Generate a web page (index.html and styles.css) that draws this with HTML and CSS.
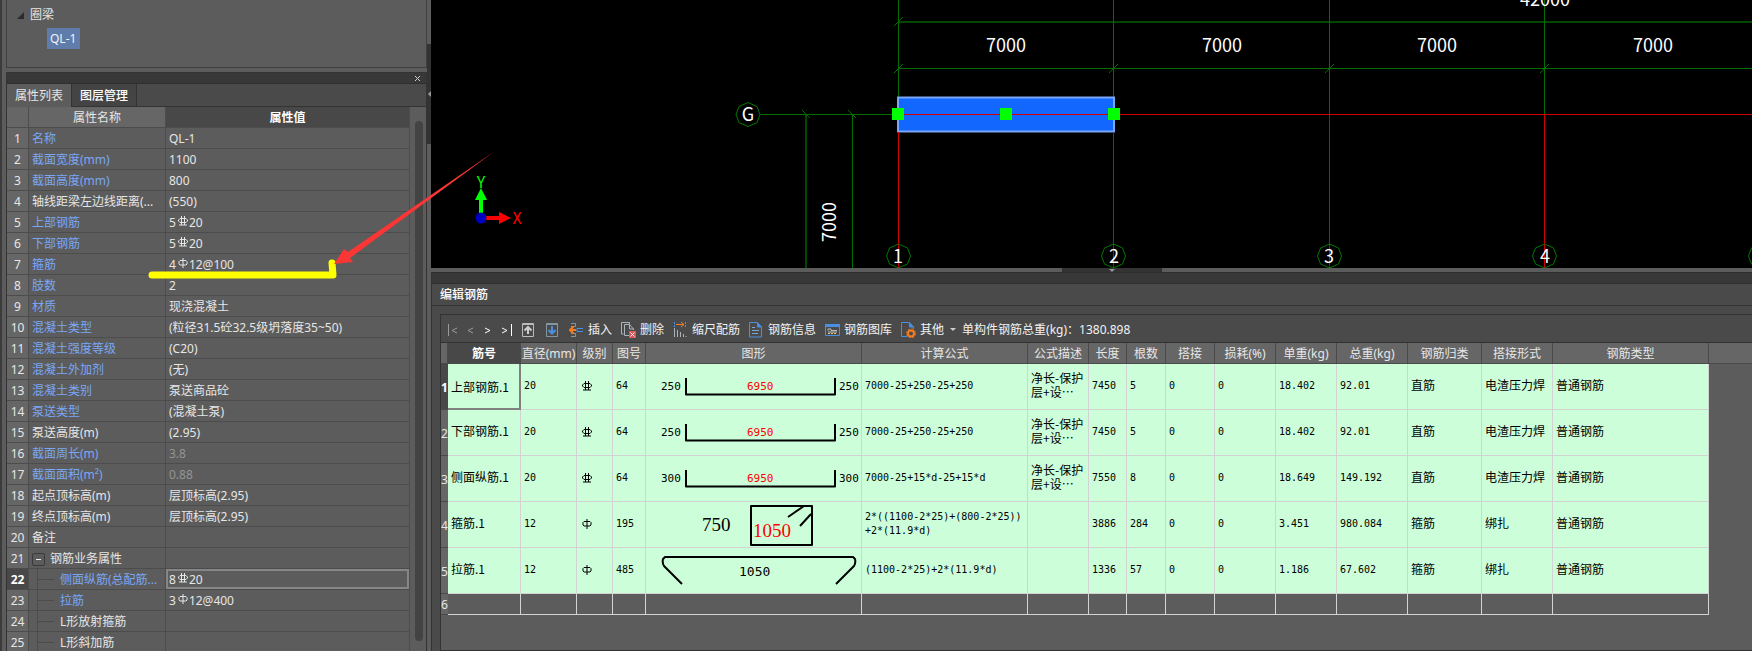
FILE: index.html
```
<!DOCTYPE html>
<html lang="zh-CN">
<head>
    <meta charset="UTF-8">
    <meta name="viewport" content="width=device-width, initial-scale=1.0">
    <title>编辑钢筋</title>
    <link rel="stylesheet" href="styles.css">
</head>
<body>
    <!-- Rebar grade symbols -->
    <svg class="defs" aria-hidden="true">
        <symbol id="hrb400" viewBox="0 0 10 10">
            <path d="M2 2.500h6L9.500 4v1L8 6.500H2L.5 5V4zM3.500 0v9M6.500 0v9M1 9h8" fill="none" stroke="currentColor"/>
        </symbol>
        <symbol id="hpb300" viewBox="0 0 10 10">
            <path d="M2 2.500h6L9 3.500v2.500L8 7H2L1 6V3.500zM5 0v10" fill="none" stroke="currentColor"/>
        </symbol>
    </svg>

    <aside class="side">
        <ul class="tree">
            <li>
                <span class="tree-label"><svg class="tree-arrow" width="7" height="7"><path d="M7 0v7H0z" fill="#2b2b2b"/></svg>圈梁</span>
                <ul>
                    <li><a class="tree-item" href="#">QL-1</a></li>
                </ul>
            </li>
        </ul>

        <section class="dock">
            <div class="dock-bar">
                <button class="close" aria-label="关闭"><svg width="7" height="7"><path d="M1 1l5 5M6 1L1 6" stroke="#ccc"/></svg></button>
            </div>
            <div class="tabs">
                <button class="tab active">属性列表</button>
                <button class="tab">图层管理</button>
            </div>
            <div class="prop-body">
                <table class="props">
                    <colgroup><col class="p-num"><col class="p-name"><col></colgroup>
                    <tr><th></th><th>属性名称</th><th class="current">属性值</th></tr>
                    <tr><th>1</th><td class="blue">名称</td><td>QL-1</td></tr>
                    <tr><th>2</th><td class="blue">截面宽度(mm)</td><td>1100</td></tr>
                    <tr><th>3</th><td class="blue">截面高度(mm)</td><td>800</td></tr>
                    <tr><th>4</th><td>轴线距梁左边线距离(...</td><td>(550)</td></tr>
                    <tr><th>5</th><td class="blue">上部钢筋</td><td>5<svg class="rebar"><use href="#hrb400"/></svg>20</td></tr>
                    <tr><th>6</th><td class="blue">下部钢筋</td><td>5<svg class="rebar"><use href="#hrb400"/></svg>20</td></tr>
                    <tr><th>7</th><td class="blue">箍筋</td><td>4<svg class="rebar"><use href="#hpb300"/></svg>12@100</td></tr>
                    <tr><th>8</th><td class="blue">肢数</td><td>2</td></tr>
                    <tr><th>9</th><td class="blue">材质</td><td>现浇混凝土</td></tr>
                    <tr><th>10</th><td class="blue">混凝土类型</td><td>(粒径31.5砼32.5级坍落度35~50)</td></tr>
                    <tr><th>11</th><td class="blue">混凝土强度等级</td><td>(C20)</td></tr>
                    <tr><th>12</th><td class="blue">混凝土外加剂</td><td>(无)</td></tr>
                    <tr><th>13</th><td class="blue">混凝土类别</td><td>泵送商品砼</td></tr>
                    <tr><th>14</th><td class="blue">泵送类型</td><td>(混凝土泵)</td></tr>
                    <tr><th>15</th><td>泵送高度(m)</td><td>(2.95)</td></tr>
                    <tr><th>16</th><td class="blue">截面周长(m)</td><td class="dim">3.8</td></tr>
                    <tr><th>17</th><td class="blue">截面面积(m²)</td><td class="dim">0.88</td></tr>
                    <tr><th>18</th><td>起点顶标高(m)</td><td>层顶标高(2.95)</td></tr>
                    <tr><th>19</th><td>终点顶标高(m)</td><td>层顶标高(2.95)</td></tr>
                    <tr><th>20</th><td>备注</td><td></td></tr>
                    <tr><th>21</th><td><div class="group"><button class="toggle" aria-label="折叠"><svg width="5" height="1"><path d="M0 .5h5" stroke="#eee"/></svg></button>钢筋业务属性</div></td><td></td></tr>
                    <tr><th class="current">22</th><td class="blue twig">侧面纵筋(总配筋...</td><td class="editing">8<svg class="rebar"><use href="#hrb400"/></svg>20</td></tr>
                    <tr><th>23</th><td class="blue twig">拉筋</td><td>3<svg class="rebar"><use href="#hpb300"/></svg>12@400</td></tr>
                    <tr><th>24</th><td class="twig">L形放射箍筋</td><td></td></tr>
                    <tr><th>25</th><td class="twig">L形斜加筋</td><td></td></tr>
                </table>
                <div class="scroll"><div class="thumb"></div></div>
            </div>
        </section>
    </aside>

    <div class="splitter-v"><div class="grip"><svg width="3" height="6"><path d="M3 0v6L0 3z" fill="#999"/></svg></div></div>

    <main class="work">
        <svg class="canvas">
            <!-- axis grid -->
            <g class="green">
                <path class="heavy" d="M467 22H1400M375 114V268"/>
                <path d="M467 68.5H1400M329 114.5H467M421.5 114V268M467.500 0V114M682.500 0V114M898.500 0V114M1113.500 0V114"/>
                <path d="M463 26l9-9M463 73l9-9M678 73l9-9M894 73l9-9M1109 73l9-9M371 110l8 8M417 110l8 8"/>
            </g>
            <rect x="467" y="97.500" width="216" height="34" fill="#1267ff" stroke="#7ba6f5" stroke-width="2"/>
            <path class="red" d="M467 114.500H1400M467.500 132V268M682.500 132V268M898.500 114V268M1113.500 114V268"/>
            <g fill="#00ff00">
                <rect x="461" y="108" width="12" height="12"/>
                <rect x="569" y="108" width="12" height="12"/>
                <rect x="677" y="108" width="12" height="12"/>
            </g>
            <g class="bubble">
                <path d="M305 114.500l3-8 9-4 9 4 3 8-3 8-9 4-9-4z"/>
                <path d="M455.500 256l3-8 9-4 9 4 3 8-3 8-9 4-9-4z"/>
                <path d="M670.500 256l3-8 9-4 9 4 3 8-3 8-9 4-9-4z"/>
                <path d="M886.500 256l3-8 9-4 9 4 3 8-3 8-9 4-9-4z"/>
                <path d="M1101.500 256l3-8 9-4 9 4 3 8-3 8-9 4-9-4z"/>
                <path d="M1317.500 256l3-8 9-4 9 4 3 8-3 8-9 4-9-4z"/>
            </g>
            <g class="dim-text">
                <text x="1114" y="6">42000</text>
                <text x="575" y="52">7000</text>
                <text x="791" y="52">7000</text>
                <text x="1006" y="52">7000</text>
                <text x="1222" y="52">7000</text>
                <text transform="translate(405 222) rotate(-90)">7000</text>
                <text x="317" y="121">G</text>
                <text x="467" y="263">1</text>
                <text x="683" y="263">2</text>
                <text x="898" y="263">3</text>
                <text x="1114" y="263">4</text>
            </g>
            <!-- UCS icon -->
            <path d="M48 214v-14h-4l6-12 6 12h-4v14z" fill="#00ff00"/>
            <path d="M54 216h14v-4l12 6-12 6v-4H54z" fill="#ff0000"/>
            <circle cx="50" cy="218" r="5.500" fill="#0000c0"/>
            <text class="ucs" x="50" y="188" fill="#00ff00">Y</text>
            <text class="ucs" x="86" y="224" fill="#ff0000">X</text>
        </svg>

        <div class="splitter-h"><div class="grip"><svg width="6" height="3"><path d="M0 0h6L3 3z" fill="#999"/></svg></div></div>

        <section class="editor">
            <div class="editor-bar"></div>
            <h2 class="editor-title">编辑钢筋</h2>
            <div class="grid-box">
                <div class="toolbar">
                    <div class="nav">
                        <button aria-label="第一条"><svg width="12" height="14"><path d="M1.500 1v12" stroke="#999"/><path d="M10 5L5 7.500l5 2.500" fill="none" stroke="#999"/></svg></button>
                        <button aria-label="上一条"><svg width="12" height="14"><path d="M8 5L3 7.500l5 2.500" fill="none" stroke="#999"/></svg></button>
                        <button aria-label="下一条"><svg width="12" height="14"><path d="M2 5l5 2.500-5 2.500" fill="none" stroke="#fff"/></svg></button>
                        <button aria-label="最后一条"><svg width="12" height="14"><path d="M10.500 1v12" stroke="#fff"/><path d="M1 5l5 2.500-5 2.500" fill="none" stroke="#fff"/></svg></button>
                    </div>
                    <div class="move">
                        <button aria-label="上移"><svg width="12" height="14"><path d="M.5.5h11v13H.5zM0 1.500h12" fill="none" stroke="#bbb"/><path d="M6 11V5M2.500 7.500L6 4l3.500 3.500" fill="none" stroke="#ccc" stroke-width="2"/></svg></button>
                        <button aria-label="下移"><svg width="12" height="14"><path d="M.5.5h11v13H.5zM0 1.500h12" fill="none" stroke="#8496a0"/><path d="M6 3v7M2.500 7L6 10.500 9.500 7" fill="none" stroke="#4a90e2" stroke-width="2"/></svg></button>
                    </div>
                    <button class="tool"><svg width="15" height="16"><path d="M2 1.500h4.500v3H2M2 11.500h4.500v3H2" fill="none" stroke="#8496a0"/><path d="M1 8h6M4.500 4.500L1 8l3.500 3.500" fill="none" stroke="#f57c1f" stroke-width="2"/><path d="M14 6.500H8v3h6" fill="none" stroke="#4a90e2"/></svg>插入</button>
                    <button class="tool"><svg width="15" height="16"><path d="M2.500 12H.5V.5h8V2M8 13.500H3.500v-11h5L12.500 7v1" fill="none" stroke="#a9b4ba"/><path d="M8.500 2.500V7h4" fill="none" stroke="#a9b4ba"/><path d="M8 9h7v7H8z" fill="#e05555"/><path d="M9.500 10.500l4 4M13.500 10.500l-4 4" stroke="#fff"/></svg>删除</button>
                    <button class="tool"><svg width="15" height="16"><path d="M1.500 0v5M12.500 0v5" stroke="#4a90e2" stroke-dasharray="2 1"/><path d="M3 2.500h8M8 0l3 2.500L8 5" fill="none" stroke="#f57c1f"/><path d="M1.500 6v9M4.500 8v7M7.500 10v5M10.500 12v3M13 14v1" stroke="#a9b4ba"/></svg>缩尺配筋</button>
                    <button class="tool"><svg width="15" height="16"><path d="M.5.5h8L12.500 5v10H.5z" fill="none" stroke="#4a90e2"/><path d="M8.500.5V5h4" fill="#4a90e2" stroke="#4a90e2"/><path d="M3 5.500h3M3 8.500h7M3 11.500h6" stroke="#7aa7d5"/></svg>钢筋信息</button>
                    <button class="tool"><svg width="15" height="16"><path d="M.5 2.500h14v11H.5z" fill="none" stroke="#4a90e2"/><path d="M0 3.500h15" stroke="#4a90e2" stroke-width="3"/><path d="M3 8.500V7h3v1.500h6M3 10h9" fill="none" stroke="#bbb"/><path d="M3 11.500h9" stroke="#f0c060" stroke-dasharray="2 1"/></svg>钢筋图库</button>
                    <button class="tool"><svg width="15" height="16"><path d="M6 14.500H.5V.5h8L12.500 5v2" fill="none" stroke="#4a90e2"/><path d="M8.500.5V5h4" fill="#4a90e2" stroke="#4a90e2"/><circle cx="10" cy="11.500" r="3" fill="none" stroke="#f57c1f" stroke-width="2"/><circle cx="10" cy="11.500" r="4.500" fill="none" stroke="#f57c1f" stroke-dasharray="2 1.500"/></svg>其他<svg class="caret" width="6" height="3"><path d="M0 0h6L3 3z" fill="#ccc"/></svg></button>
                    <span class="total">单构件钢筋总重(kg)：1380.898</span>
                </div>
                <table class="rebar-grid">
                    <colgroup>
                        <col class="g-num"><col class="g-name"><col class="g-dia"><col class="g-grade"><col class="g-code"><col class="g-shape"><col class="g-formula"><col class="g-desc"><col class="g-len"><col class="g-count"><col class="g-lap"><col class="g-loss"><col class="g-unit"><col class="g-total"><col class="g-class"><col class="g-joint"><col class="g-type"><col>
                    </colgroup>
                    <thead>
                        <tr><th></th><th class="current">筋号</th><th>直径(mm)</th><th>级别</th><th>图号</th><th>图形</th><th>计算公式</th><th>公式描述</th><th>长度</th><th>根数</th><th>搭接</th><th>损耗(%)</th><th>单重(kg)</th><th>总重(kg)</th><th>钢筋归类</th><th>搭接形式</th><th>钢筋类型</th><th class="rest"></th></tr>
                    </thead>
                    <tbody>
                        <tr>
                            <th class="current">1</th><td class="cn editing">上部钢筋.1</td><td>20</td><td class="grade"><svg class="rebar"><use href="#hrb400"/></svg></td><td>64</td>
                            <td class="shape"><svg><path d="M40 14v16.500h149V14"/><text x="15" y="26">250</text><text class="hot" x="101" y="26">6950</text><text x="193" y="26">250</text></svg></td>
                            <td>7000-25+250-25+250</td><td class="cn">净长-保护层+设…</td><td>7450</td><td>5</td><td>0</td><td>0</td><td>18.402</td><td>92.01</td><td class="cn">直筋</td><td class="cn">电渣压力焊</td><td class="cn">普通钢筋</td><td class="rest"></td>
                        </tr>
                        <tr>
                            <th>2</th><td class="cn">下部钢筋.1</td><td>20</td><td class="grade"><svg class="rebar"><use href="#hrb400"/></svg></td><td>64</td>
                            <td class="shape"><svg><path d="M40 14v16.500h149V14"/><text x="15" y="26">250</text><text class="hot" x="101" y="26">6950</text><text x="193" y="26">250</text></svg></td>
                            <td>7000-25+250-25+250</td><td class="cn">净长-保护层+设…</td><td>7450</td><td>5</td><td>0</td><td>0</td><td>18.402</td><td>92.01</td><td class="cn">直筋</td><td class="cn">电渣压力焊</td><td class="cn">普通钢筋</td><td class="rest"></td>
                        </tr>
                        <tr>
                            <th>3</th><td class="cn">侧面纵筋.1</td><td>20</td><td class="grade"><svg class="rebar"><use href="#hrb400"/></svg></td><td>64</td>
                            <td class="shape"><svg><path d="M40 14v16.500h149V14"/><text x="15" y="26">300</text><text class="hot" x="101" y="26">6950</text><text x="193" y="26">300</text></svg></td>
                            <td>7000-25+15*d-25+15*d</td><td class="cn">净长-保护层+设…</td><td>7550</td><td>8</td><td>0</td><td>0</td><td>18.649</td><td>149.192</td><td class="cn">直筋</td><td class="cn">电渣压力焊</td><td class="cn">普通钢筋</td><td class="rest"></td>
                        </tr>
                        <tr>
                            <th>4</th><td class="cn">箍筋.1</td><td>12</td><td class="grade"><svg class="rebar"><use href="#hpb300"/></svg></td><td>195</td>
                            <td class="shape"><svg><path d="M105 4h61v39h-61zM142 15l16-11M154 24l11-12"/><text class="big" x="56" y="29">750</text><text class="big hot" x="107" y="35">1050</text></svg></td>
                            <td>2*((1100-2*25)+(800-2*25))<br>+2*(11.9*d)</td><td></td><td>3886</td><td>284</td><td>0</td><td>0</td><td>3.451</td><td>980.084</td><td class="cn">箍筋</td><td class="cn">绑扎</td><td class="cn">普通钢筋</td><td class="rest"></td>
                        </tr>
                        <tr>
                            <th>5</th><td class="cn">拉筋.1</td><td>12</td><td class="grade"><svg class="rebar"><use href="#hpb300"/></svg></td><td>485</td>
                            <td class="shape"><svg><path d="M36 36L18 18q-2-3-1-7l2-2h188l2 2q1 4-1 7l-18 18"/><text class="mid" x="93" y="28">1050</text></svg></td>
                            <td>(1100-2*25)+2*(11.9*d)</td><td></td><td>1336</td><td>57</td><td>0</td><td>0</td><td>1.186</td><td>67.602</td><td class="cn">箍筋</td><td class="cn">绑扎</td><td class="cn">普通钢筋</td><td class="rest"></td>
                        </tr>
                        <tr class="blank">
                            <th>6</th><td></td><td></td><td></td><td></td><td></td><td></td><td></td><td></td><td></td><td></td><td></td><td></td><td></td><td></td><td></td><td></td><td class="rest"></td>
                        </tr>
                    </tbody>
                </table>
            </div>
        </section>
    </main>

    <!-- Markup drawn over the panels -->
    <svg class="markup" aria-hidden="true">
        <path d="M152 275H333L332 263" fill="none" stroke="#ffff00" stroke-width="7" stroke-linecap="round" stroke-linejoin="round"/>
        <path d="M334 264l10-15 4 3L495 151 350 258l3 4z" fill="#fc3535"/>
    </svg>
</body>
</html>
```
FILE: styles.css
```
* {
    box-sizing: border-box;
}

body {
    margin: 0;
    height: 100vh;
    display: flex;
    overflow: hidden;
    background: #5c5c5c;
    color: #e6e6e6;
    font-family: "Noto Sans", "Noto Sans CJK SC", sans-serif;
    font-size: 12px;
    line-height: 20px;
}

button {
    margin: 0;
    padding: 0;
    border: none;
    background: none;
    color: inherit;
    font: inherit;
    display: flex;
    align-items: center;
    justify-content: center;
}

table {
    border-collapse: separate;
    border-spacing: 0;
    table-layout: fixed;
    width: 100%;
}

.defs {
    position: absolute;
    width: 0;
    height: 0;
}

.rebar {
    width: 10px;
    height: 10px;
    margin: 0 1px 0 2px;
    vertical-align: 1px;
}

/* Left side */
.side {
    flex: 0 0 427px;
    display: flex;
    flex-direction: column;
    padding-left: 4px;
    border-left: 2px solid #3c3c3c;
    min-height: 0;
}

.tree, .tree ul {
    margin: 0;
    padding: 0;
    list-style: none;
}

.tree {
    flex: none;
    height: 68px;
    padding: 5px 0 0 10px;
    border: 1px solid #404040;
    border-top: none;
}

.tree-label {
    display: flex;
    align-items: center;
    gap: 6px;
    line-height: 20px;
}

.tree ul {
    padding: 3px 0 0 30px;
}

.tree-item {
    display: inline-block;
    padding: 0 4px 0 3px;
    background: #5f7cab;
    color: #f2f2f2;
    line-height: 21px;
    text-decoration: none;
}

.dock {
    flex: 1;
    display: flex;
    flex-direction: column;
    min-height: 0;
    margin-top: 4px;
    border: 1px solid #333;
    border-bottom: none;
}

.dock-bar {
    display: flex;
    justify-content: flex-end;
    height: 11px;
    padding-right: 4px;
    background: #383838;
    border-bottom: 1px solid #2e2e2e;
}

.close {
    width: 9px;
}

.tabs {
    flex: none;
    display: flex;
    height: 23px;
    background: #4a4a4a;
    border-bottom: 1px solid #333;
}

.tab {
    padding: 1px 8px 0;
    border-right: 1px solid #333;
    background: #444;
    color: #fff;
    font-weight: 500;
}

.tab.active {
    height: 23px;
    background: #5c5c5c;
    color: #e6e6e6;
    font-weight: 400;
}

.prop-body {
    flex: 1;
    display: flex;
    min-height: 0;
    overflow: hidden;
}

.props {
    flex: 1;
    align-self: flex-start;
}

.p-num { width: 22px; }
.p-name { width: 137px; }

.props th, .props td {
    height: 21px;
    padding: 2px 3px 0;
    border-right: 1px solid #4c4c4c;
    border-bottom: 1px solid #4c4c4c;
    line-height: 18px;
    white-space: nowrap;
}

.props th {
    padding: 2px 0 0;
    background: #666;
    font-weight: 400;
    text-align: center;
}

.props th.current {
    background: #484848;
    color: #fff;
    font-weight: 700;
}

.props .blue { color: #7aa7f5; }
.props .dim { color: #949494; }

.props .twig {
    padding-left: 31px;
    background: linear-gradient(#4c4c4c, #4c4c4c) 8px 0 / 1px 100% no-repeat,
        linear-gradient(#4c4c4c, #4c4c4c) 9px 50% / 16px 1px no-repeat;
}

.props .editing {
    box-shadow: inset 0 0 0 2px #868686;
}

.group {
    display: flex;
    align-items: center;
    gap: 5px;
    height: 18px;
}

.toggle {
    width: 13px;
    height: 13px;
    border: 1px solid #3a3a3a;
    border-radius: 2px;
}

.scroll {
    flex: 0 0 16px;
    display: flex;
    padding: 14px 3px 10px 5px;
}

.thumb {
    flex: 1;
    border-radius: 4px;
    background: #434343;
}

/* Splitters */
.splitter-v {
    flex: 0 0 4px;
    padding-top: 44px;
}

.splitter-h {
    flex: 0 0 4px;
    display: flex;
    justify-content: center;
}

.grip {
    display: flex;
    align-items: center;
    justify-content: center;
    background: #333;
}

.splitter-v .grip { height: 100px; }
.splitter-h .grip { width: 100px; margin-left: 40px; }

/* Drawing area */
.work {
    flex: 1;
    display: flex;
    flex-direction: column;
    min-width: 0;
}

.canvas {
    flex: none;
    width: 100%;
    height: 268px;
    background: #000;
}

.canvas .green { fill: none; stroke: #006f00; }
.canvas .heavy { stroke: #004800; stroke-width: 2; }
.canvas .red { fill: none; stroke: #d00000; }
.canvas .bubble { fill: none; stroke: #007800; }

.dim-text {
    fill: #fff;
    font-family: "Noto Sans CJK SC", sans-serif;
    font-size: 18px;
    text-anchor: middle;
}

.ucs {
    font-family: "Noto Sans CJK SC", sans-serif;
    font-size: 16px;
    text-anchor: middle;
}

/* Rebar editor */
.editor {
    flex: 1;
    display: flex;
    flex-direction: column;
    min-height: 0;
    border-left: 1px solid #333;
    background: #4a4a4a;
}

.editor-bar {
    flex: none;
    height: 12px;
    background: #383838;
    border-top: 1px solid #2e2e2e;
    border-bottom: 1px solid #2e2e2e;
}

.editor-title {
    margin: 0 0 8px;
    padding-left: 8px;
    border-bottom: 1px solid #333;
    color: #fff;
    font-size: 12px;
    font-weight: 500;
    line-height: 21px;
}

.grid-box {
    flex: 1;
    min-height: 0;
    overflow: hidden;
    margin-left: 8px;
    border: 1px solid #333;
    border-right: none;
    background: #5c5c5c;
}

.toolbar {
    display: flex;
    align-items: center;
    gap: 9px;
    height: 28px;
    padding: 2px 0 0 6px;
    background: #4a4a4a;
    border-bottom: 1px solid #333;
    color: #f2f2f2;
    white-space: nowrap;
}

.nav {
    display: flex;
    gap: 6px;
}

.move {
    display: flex;
    gap: 12px;
    margin-right: 2px;
}

.tool { gap: 4px; }
.caret { margin: 0 -3px 0 2px; }

.g-num { width: 7px; }
.g-name { width: 73px; }
.g-dia { width: 56px; }
.g-grade { width: 36px; }
.g-code { width: 33px; }
.g-shape { width: 216px; }
.g-formula { width: 166px; }
.g-desc { width: 61px; }
.g-len { width: 38px; }
.g-count { width: 39px; }
.g-lap { width: 49px; }
.g-loss { width: 61px; }
.g-unit { width: 61px; }
.g-total { width: 71px; }
.g-class { width: 74px; }
.g-joint { width: 71px; }
.g-type { width: 156px; }

.rebar-grid th {
    height: 21px;
    padding: 2px 0 0;
    border-right: 1px solid #4a4a4a;
    border-bottom: 1px solid #4a4a4a;
    background: #666;
    font-weight: 400;
    line-height: 18px;
    white-space: nowrap;
}

.rebar-grid th.current {
    background: #484848;
    color: #fff;
    font-weight: 700;
}

.rebar-grid tbody th {
    border-right: none;
}

.rebar-grid td {
    height: 46px;
    padding: 0 3px 1px;
    border-right: 1px solid #d3d3d3;
    border-bottom: 1px solid #d3d3d3;
    background: #ccffd9;
    color: #000;
    font-family: "DejaVu Sans Mono", monospace;
    font-size: 10px;
    line-height: 14px;
}

.rebar-grid td.cn {
    padding-bottom: 3px;
    font-family: "Noto Sans CJK SC", sans-serif;
    font-size: 12px;
}

.rebar-grid td.editing {
    padding-bottom: 0;
    box-shadow: inset -1px -1px 0 #808080;
    border-color: #808080;
}

.rebar-grid .grade .rebar {
    vertical-align: middle;
}

.rebar-grid .blank td {
    height: 21px;
    background: #5c5c5c;
}

.rebar-grid .rest,
.rebar-grid .blank .rest {
    border-right: none;
}

.rebar-grid td.rest {
    border: none;
    background: #5c5c5c;
}

.rebar-grid td.shape {
    padding: 0;
}

.shape svg {
    display: block;
    width: 100%;
    height: 45px;
}

.shape path {
    fill: none;
    stroke: #000;
    stroke-width: 2;
    stroke-linejoin: round;
}

.shape text { font-size: 11px; }
.shape .mid { font-size: 13px; }
.shape .big { font-family: "Liberation Serif", serif; font-size: 19px; }
.shape .hot { fill: #ff0000; }

.markup {
    position: absolute;
    left: 0;
    top: 0;
    width: 100%;
    height: 100%;
    pointer-events: none;
}
```
